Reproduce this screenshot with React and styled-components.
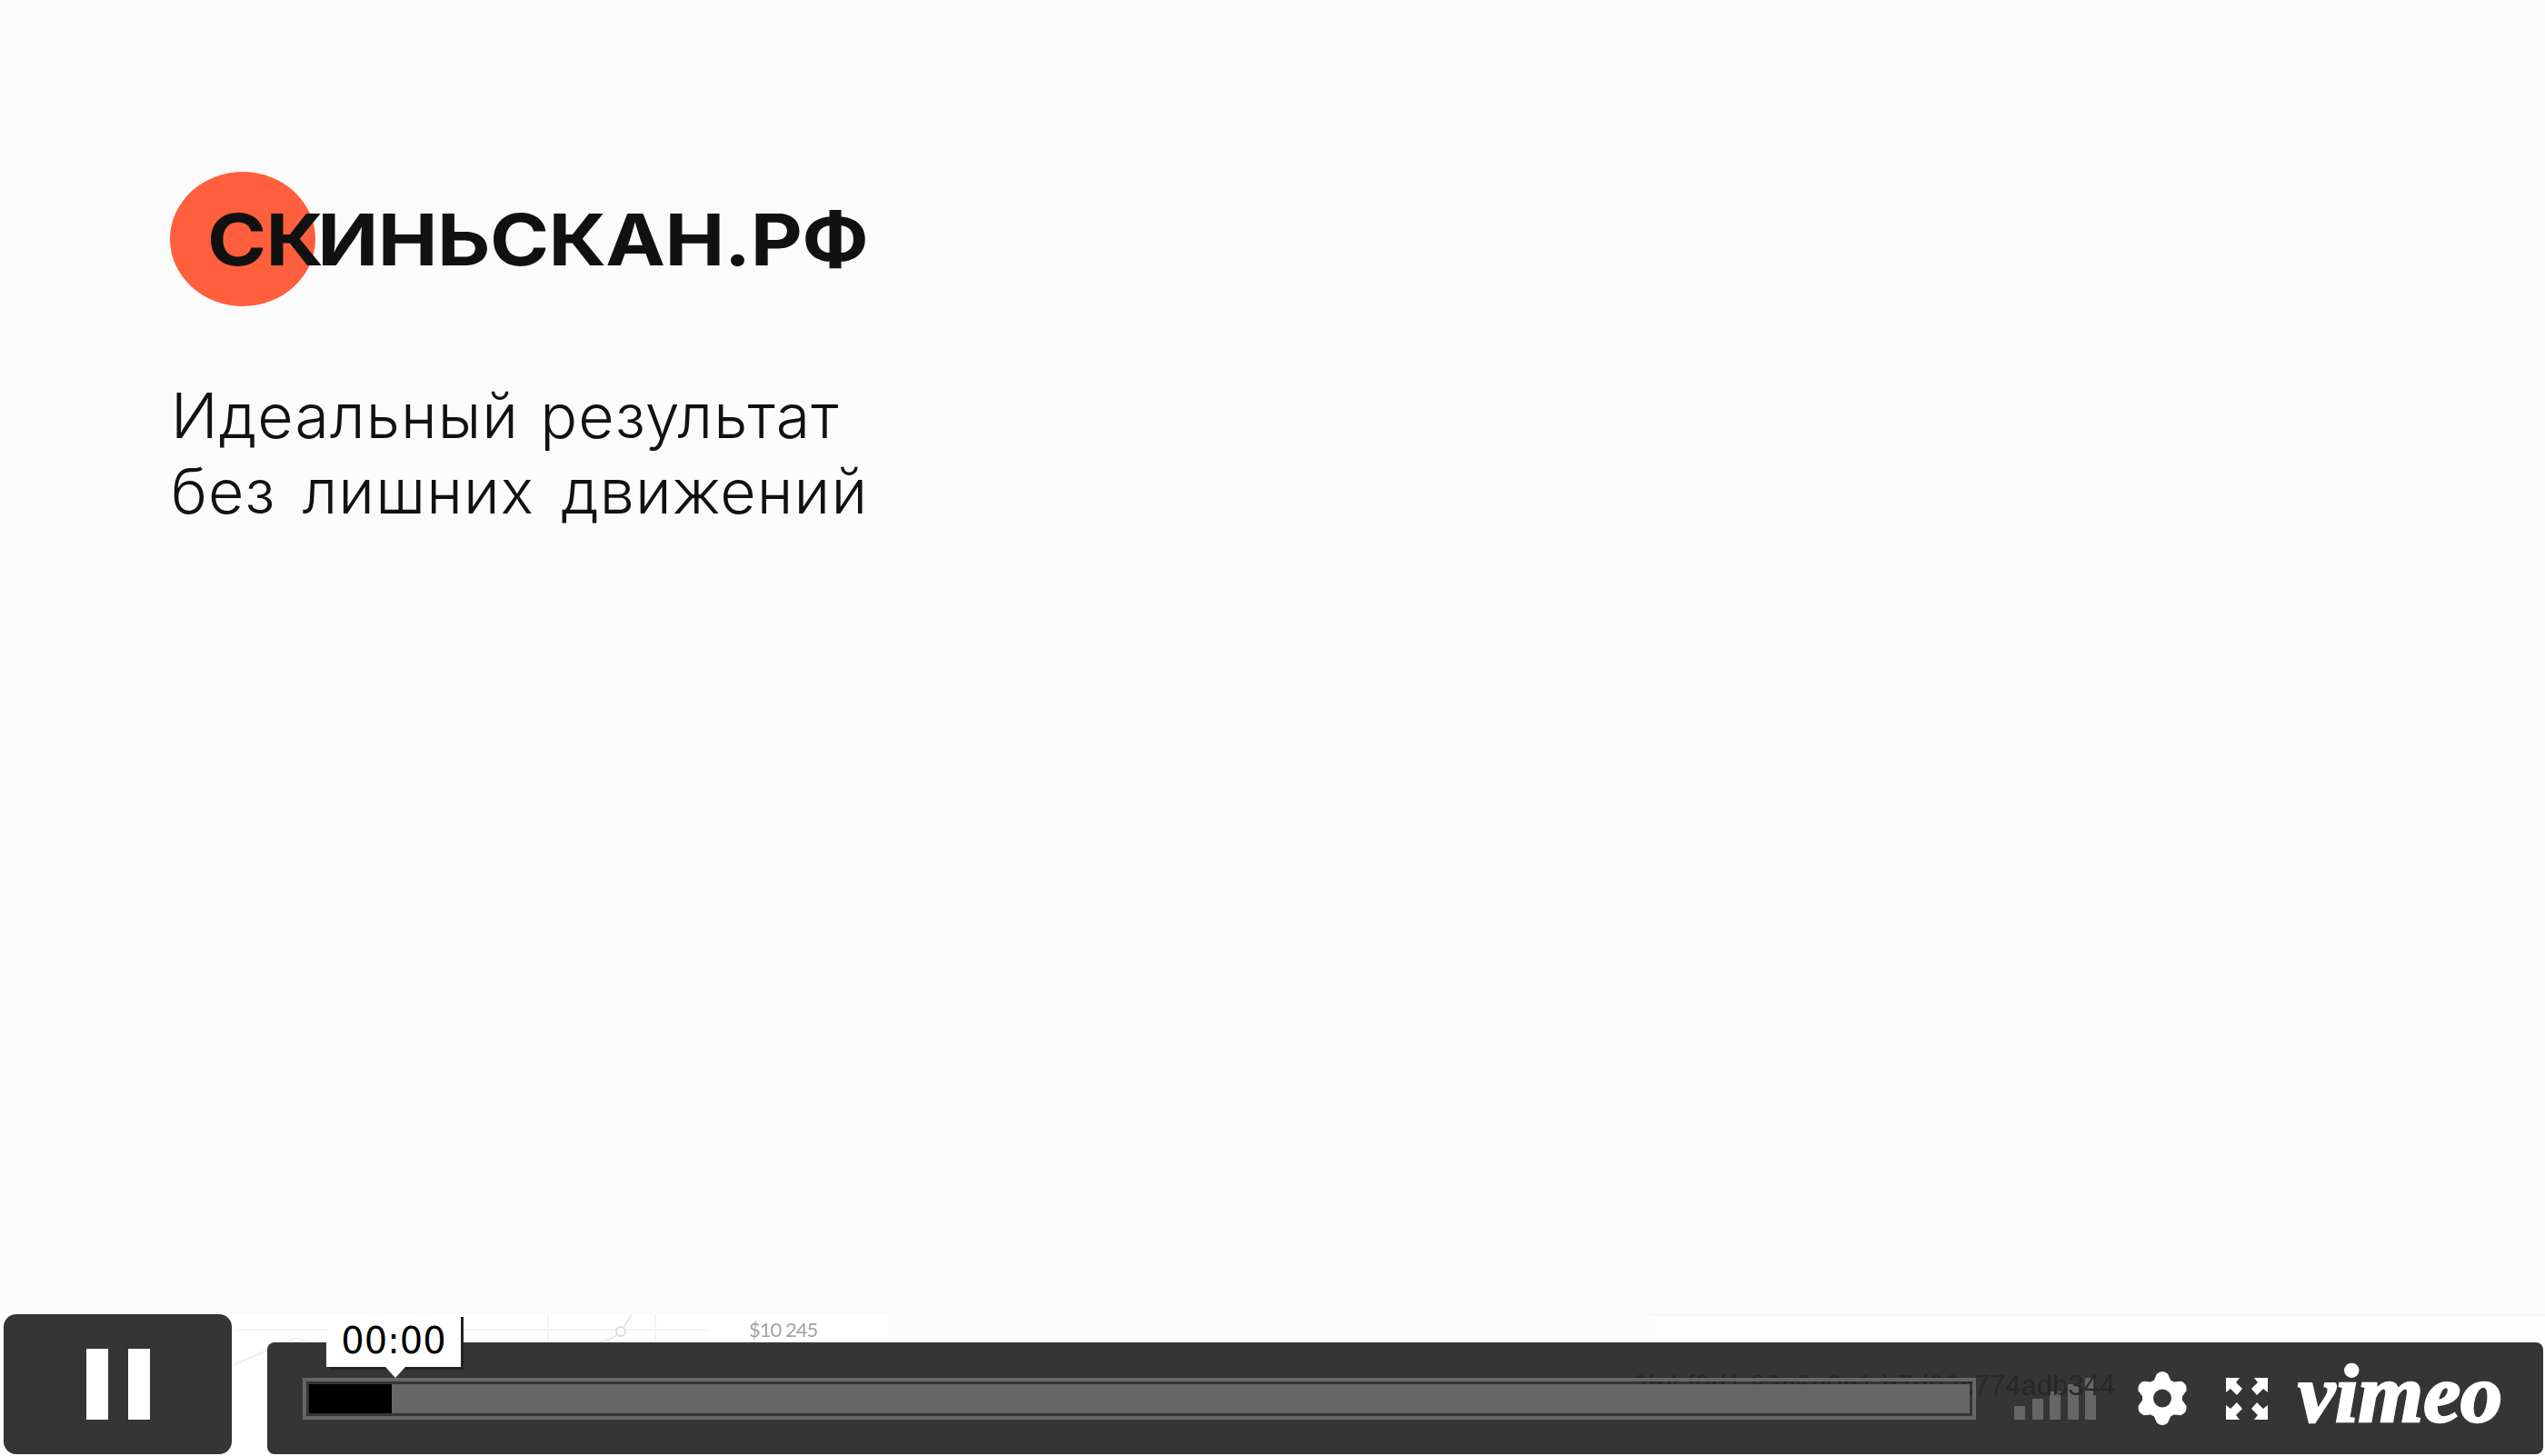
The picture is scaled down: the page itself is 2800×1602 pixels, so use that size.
import React from 'react';
import styled, { createGlobalStyle } from 'styled-components';

const GlobalStyle = createGlobalStyle`
  html, body {
    margin: 0;
    padding: 0;
    background: #fbfbfb;
  }
`;

const Page = styled.div`
  position: relative;
  width: 2800px;
  height: 1602px;
  overflow: hidden;
  background: #fbfbfb;
  color: #111;
  font-family: Inter, "Liberation Sans", sans-serif;
`;

const Hero = styled.section`
  padding: 189px 0 0 187px;
`;

const Brand = styled.div`
  position: relative;
  display: flex;
  align-items: center;
  height: 148px;
  padding-left: 41px;
`;

const BrandDot = styled.div`
  position: absolute;
  left: 0;
  top: 0;
  width: 160px;
  height: 148px;
  border-radius: 50%;
  background: #ff5f3c;
`;

const BrandName = styled.h1`
  position: relative;
  margin: 0;
  font-size: 79px;
  font-weight: 700;
  line-height: 1;
  letter-spacing: -0.5px;
  white-space: nowrap;
  color: #111;
  transform: scaleX(1.115);
  transform-origin: left center;
`;

const TightLetter = styled.span`
  letter-spacing: -6px;
`;

const Tagline = styled.div`
  margin: 79px 0 0 1px;
  font-size: 68px;
  font-weight: 300;
  line-height: 83px;
  letter-spacing: 1.1px;
  white-space: nowrap;
  color: #111;
`;

const TaglineRow = styled.div`
  word-spacing: ${(props) => props.$wordGap}px;
`;

const Backdrop = styled.div`
  position: absolute;
  left: 0;
  top: 1446px;
  width: 2800px;
  height: 156px;
  display: flex;
  justify-content: space-between;
`;

const ChartStrip = styled.div`
  position: relative;
  width: 977px;
  background: #fff;
`;

const ChartLines = styled.svg`
  display: block;
`;

const ChartLabel = styled.span`
  position: absolute;
  left: 824px;
  top: 5px;
  font-family: Lato, "Liberation Sans", sans-serif;
  font-size: 22px;
  line-height: 24px;
  letter-spacing: -1px;
  color: #a2a2a2;
  filter: blur(0.7px);
`;

const TableStrip = styled.div`
  width: 985px;
  background: #fdfdfd;
  border-top: 2px solid #f7f7f7;
`;

const Controls = styled.div`
  position: absolute;
  left: 4px;
  right: 2px;
  bottom: 2px;
  display: flex;
  align-items: flex-end;
  gap: 39px;
`;

const PauseButton = styled.button`
  flex: none;
  width: 251px;
  height: 154px;
  padding: 0;
  border: 0;
  border-radius: 14px;
  background: #353535;
  display: flex;
  align-items: center;
  justify-content: center;
  gap: 22px;
`;

const PauseBar = styled.span`
  width: 24px;
  height: 78px;
  background: #fff;
`;

const Bar = styled.div`
  position: relative;
  flex: 1;
  height: 123px;
  box-sizing: border-box;
  padding: 0 45px 0 39px;
  border-radius: 8px;
  background: #353535;
  display: flex;
  align-items: center;
`;

const GhostText = styled.span`
  position: absolute;
  right: 471px;
  top: 30px;
  font-family: "Liberation Sans", sans-serif;
  font-size: 31px;
  line-height: 36px;
  white-space: nowrap;
  color: #272727;
  filter: blur(0.6px);
`;

const Track = styled.div`
  position: relative;
  flex: 1;
  height: 46px;
  box-sizing: border-box;
  padding: 3px;
  border: 4px solid #666;
  margin-right: 42px;
`;

const TrackFill = styled.div`
  height: 100%;
  background: #666;
`;

const TrackPlayed = styled.div`
  width: ${(props) => props.$progress}%;
  height: 100%;
  background: #000;
`;

const TimeTip = styled.div`
  position: absolute;
  left: 65px;
  top: -31px;
  width: 148px;
  height: 58px;
  background: #fff;
  box-shadow: 3px 3px 0 #232323;
  font-family: "DejaVu Sans", Verdana, sans-serif;
  font-size: 40px;
  line-height: 58px;
  text-align: center;
  color: #000;

  &::after {
    content: '';
    position: absolute;
    left: 65px;
    top: 58px;
    border-left: 11px solid transparent;
    border-right: 11px solid transparent;
    border-top: 12px solid #fff;
  }
`;

const Volume = styled.div`
  display: flex;
  align-items: flex-end;
  gap: 7.5px;
  height: 46px;
  margin-right: 44px;
`;

const VolumeBar = styled.span`
  width: 12px;
  height: ${(props) => props.$height}px;
  background: #666;
`;

const IconBox = styled.svg`
  flex: none;
  display: block;
  fill: #fff;
  margin-right: ${(props) => props.$gap}px;
`;

const Wordmark = styled.span`
  flex: none;
  font-family: "Liberation Serif", serif;
  font-style: italic;
  font-weight: 700;
  font-size: 92px;
  line-height: 92px;
  color: #fff;
  -webkit-text-stroke: 2.5px #fff;
  position: relative;
  top: -6px;
`;

const GearIcon = () => (
  <IconBox $gap={41} width="58" height="61" viewBox="-29 -30.5 58 61">
    <circle r="22" />
    {[0, 60, 120, 180, 240, 300].map((deg) => (
      <path key={deg} transform={`rotate(${deg})`} d="M-10 -18 L-6 -27 Q0 -32 6 -27 L10 -18 Z" />
    ))}
    <circle r="10" fill="#353535" />
  </IconBox>
);

const FullscreenIcon = () => (
  <IconBox $gap={33} width="46" height="46" viewBox="0 0 46 46">
    {['', 'translate(46 0) scale(-1 1)', 'translate(0 46) scale(1 -1)', 'translate(46 46) scale(-1 -1)'].map((t) => (
      <polygon key={t} transform={t} points="0,0 15,0 11,5 18,12 12,19 5,12 0,16" />
    ))}
  </IconBox>
);

const App = () => {
  return (
    <Page>
      <GlobalStyle />
      <Hero>
        <Brand>
          <BrandDot />
          <BrandName>
            С<TightLetter>К</TightLetter>ИНЬСКАН.РФ
          </BrandName>
        </Brand>
        <Tagline>
          <TaglineRow $wordGap={3}>Идеальный результат</TaglineRow>
          <TaglineRow $wordGap={9}>без лишних движений</TaglineRow>
        </Tagline>
      </Hero>

      <Backdrop>
        <ChartStrip>
          <ChartLines width="977" height="156" viewBox="0 0 977 156" fill="none">
            <path d="M258 17H780M603 0V31M721 0V31" stroke="#f3f3f3" strokeWidth="2" />
            <path d="M254 57L326 26L352 36" stroke="#eeeeee" strokeWidth="2" />
            <path d="M660 31Q678 26 684 18L695 0" stroke="#e6e6e6" strokeWidth="2" />
            <circle cx="683" cy="19" r="5" fill="#fff" stroke="#dddddd" strokeWidth="2" />
          </ChartLines>
          <ChartLabel>$10 245</ChartLabel>
        </ChartStrip>
        <TableStrip />
      </Backdrop>

      <Controls>
        <PauseButton aria-label="Pause">
          <PauseBar />
          <PauseBar />
        </PauseButton>
        <Bar>
          <GhostText>2b4 f9d1 83c6e0a1 b7d92c774adb344</GhostText>
          <Track>
            <TrackFill>
              <TrackPlayed $progress={5} />
            </TrackFill>
          </Track>
          <TimeTip>00:00</TimeTip>
          <Volume>
            {[15, 23, 31, 39, 46].map((h) => (
              <VolumeBar key={h} $height={h} />
            ))}
          </Volume>
          <GearIcon />
          <FullscreenIcon />
          <Wordmark>vimeo</Wordmark>
        </Bar>
      </Controls>
    </Page>
  );
};

export default App;
